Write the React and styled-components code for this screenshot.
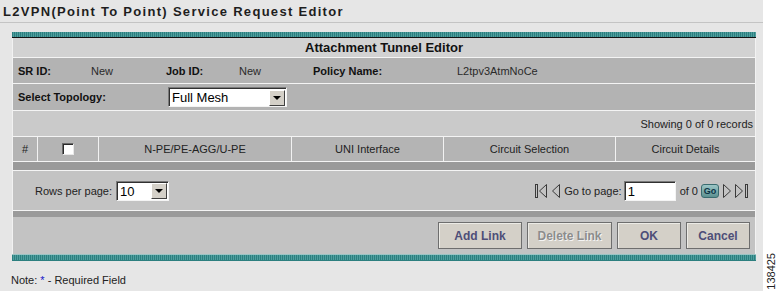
import React from 'react'
import styled, { createGlobalStyle } from 'styled-components'

const Global = createGlobalStyle`
  body {
    margin: 0;
    background: #fff;
    font-family: "Liberation Sans", Arial, sans-serif;
    color: #111;
  }
`

const Shell = styled.div`
  display: flex;
  width: 778px;
  height: 291px;
  overflow: hidden;
`

const Main = styled.div`
  width: 763px;
  background: #e6e6e6;
  display: flex;
  flex-direction: column;
`

const Side = styled.div`
  flex: 1;
  background: #fff;
  display: flex;
  flex-direction: column;
  justify-content: flex-end;
  align-items: center;
  padding-bottom: 1px;
`

const FigNo = styled.span`
  writing-mode: vertical-rl;
  transform: rotate(180deg);
  font-size: 11px;
  color: #222;
`

const TitleBar = styled.div`
  height: 23px;
  box-sizing: border-box;
  border-bottom: 1px solid #c4c4c4;
  padding-left: 3px;
  font-size: 13px;
  font-weight: bold;
  letter-spacing: 1.3px;
  line-height: 24px;
  color: #1e1e1e;
`

const Panel = styled.div`
  margin: 9px 0 0 12px;
  width: 744px;
`

const Stripe = styled.div`
  height: 5px;
  background: repeating-linear-gradient(90deg, #2c7f7f 0 1px, #4f9e9e 1px 2px);
  border-bottom: 1px solid ${p => (p.bottom ? '#2c7f7f' : '#111')};
  border-top: ${p => (p.bottom ? '1px solid #9cc4c4' : 'none')};
`

const Body = styled.div`
  border-left: 1px solid #f2f2f2;
  border-right: 1px solid #f2f2f2;
`

const Row = styled.div`
  height: ${p => p.h}px;
  background: ${p => p.bg || '#b3b3b3'};
  border-bottom: ${p => (p.noLine ? 'none' : '1px solid #f4f4f4')};
  display: flex;
  align-items: center;
  font-size: 11px;
`

const Heading = styled(Row)`
  justify-content: center;
  font-size: 13px;
  font-weight: bold;
  color: #111;
`

const InfoGrid = styled(Row)`
  display: grid;
  grid-template-columns: 73px 75px 73px 74px 144px 1fr;
  padding-left: 5px;
`

const Label = styled.span`
  font-weight: bold;
  font-size: 11px;
  color: #111;
  width: ${p => (p.w ? `${p.w}px` : 'auto')};
  padding-left: ${p => p.pl || 0}px;
`

const Value = styled.span`
  color: #2a2a2a;
`

const Records = styled(Row)`
  justify-content: flex-end;
  padding-right: 2px;
  color: #222;
`

const HeadCell = styled.div`
  width: ${p => p.w}px;
  flex: ${p => (p.w ? 'none' : 1)};
  height: 100%;
  display: flex;
  align-items: center;
  justify-content: center;
  border-right: ${p => (p.last ? 'none' : '1px solid #f2f2f2')};
  color: #222;
`

const CheckBox = styled.span`
  width: 10px;
  height: 10px;
  background: #fff;
  border-top: 1px solid #6a6a6a;
  border-left: 1px solid #6a6a6a;
  border-right: 1px solid #e8e8e8;
  border-bottom: 1px solid #e8e8e8;
  box-shadow: inset 1px 1px 0 #2a2a2a;
`

const Pager = styled(Row)`
  justify-content: space-between;
  padding: 0 6px 0 22px;
`

const Group = styled.div`
  display: flex;
  align-items: center;
  gap: ${p => p.gap || 0}px;
  color: #222;
`

const Gap = styled.span`
  width: ${p => p.w}px;
`

const SelectBox = styled.div`
  width: ${p => p.w}px;
  height: 20px;
  box-sizing: border-box;
  display: flex;
  align-items: center;
  background: #fff;
  border-top: 1px solid #7a7a7a;
  border-left: 1px solid #7a7a7a;
  border-right: 1px solid #f4f4f4;
  border-bottom: 1px solid #f4f4f4;
  box-shadow: inset 1px 1px 0 #303030;
  font-size: 13px;
  color: #000;
`

const SelectText = styled.span`
  flex: 1;
  padding-left: 3px;
  padding-top: 1px;
`

const Arrow = styled.span`
  width: 16px;
  height: 16px;
  margin: 1px 1px 0 0;
  box-sizing: border-box;
  background: #d4d0c8;
  border-top: 1px solid #fff;
  border-left: 1px solid #fff;
  border-right: 1px solid #404040;
  border-bottom: 1px solid #404040;
  display: flex;
  align-items: center;
  justify-content: center;
  &::after {
    content: '';
    border-left: 4px solid transparent;
    border-right: 4px solid transparent;
    border-top: 4px solid #000;
  }
`

const GoButton = styled.span`
  width: 18px;
  height: 14px;
  box-sizing: border-box;
  border: 1px solid #3a6c70;
  border-radius: 3px;
  background: linear-gradient(#9cc6c6, #5c9090);
  font-size: 9px;
  font-weight: bold;
  color: #0c3446;
  display: flex;
  align-items: center;
  justify-content: center;
  margin: 0 4px 0 3px;
`

const Actions = styled(Row)`
  justify-content: flex-end;
  align-items: flex-start;
  gap: 5px;
  padding: 5px 5px 0 0;
`

const Button = styled.button`
  width: ${p => p.w}px;
  height: 27px;
  box-sizing: border-box;
  background: #d4d0c8;
  border: 1px solid #6e6e6e;
  box-shadow: inset 1px 1px 0 #ecebe6;
  font-family: "Liberation Sans", Arial, sans-serif;
  font-size: 12px;
  font-weight: bold;
  color: ${p => (p.disabled ? '#8c8c8c' : '#4e4e78')};
  text-shadow: ${p => (p.disabled ? '1px 1px 0 #f4f4f4' : 'none')};
  padding: 0;
`

const Note = styled.div`
  margin: 13px 0 0 11px;
  font-size: 11px;
  line-height: 12px;
  color: #222;
`

const Star = styled.span`
  color: #1414c8;
`

const NavIcon = ({ kind }) => {
  const stroke = '#3a3a3a'
  if (kind === 'first')
    return (
      <svg width="12" height="14" viewBox="0 0 12 14">
        <rect x="0.5" y="0.5" width="2" height="13" fill="none" stroke={stroke} />
        <polygon points="11.5,0.5 4.5,7 11.5,13.5" fill="none" stroke={stroke} />
      </svg>
    )
  if (kind === 'prev')
    return (
      <svg width="8" height="14" viewBox="0 0 8 14">
        <polygon points="7.5,0.5 0.5,7 7.5,13.5" fill="none" stroke={stroke} />
      </svg>
    )
  if (kind === 'next')
    return (
      <svg width="9" height="14" viewBox="0 0 9 14">
        <polygon points="0.5,0.5 7.5,7 0.5,13.5" fill="none" stroke={stroke} />
      </svg>
    )
  return (
    <svg width="14" height="14" viewBox="0 0 14 14">
      <polygon points="0.5,0.5 7.5,7 0.5,13.5" fill="none" stroke={stroke} />
      <rect x="10.5" y="0.5" width="2" height="13" fill="none" stroke={stroke} />
    </svg>
  )
}

const columns = [
  { w: 24, label: '#' },
  { w: 60, check: true },
  { w: 192, label: 'N-PE/PE-AGG/U-PE' },
  { w: 151, label: 'UNI Interface' },
  { w: 171, label: 'Circuit Selection' },
  { label: 'Circuit Details', last: true },
]

export default function App() {
  return (
    <>
      <Global />
      <Shell>
        <Main>
          <TitleBar>L2VPN(Point To Point) Service Request Editor</TitleBar>
          <Panel>
            <Stripe />
            <Body>
              <Heading h={19} bg="#d2d2d2">Attachment Tunnel Editor</Heading>
              <InfoGrid h={25}>
                <Label>SR ID:</Label>
                <Value>New</Value>
                <Label>Job ID:</Label>
                <Value>New</Value>
                <Label>Policy Name:</Label>
                <Value>L2tpv3AtmNoCe</Value>
              </InfoGrid>
              <Row h={26}>
                <Label w={150} pl={5}>Select Topology:</Label>
                <SelectBox w={119}>
                  <SelectText>Full Mesh</SelectText>
                  <Arrow />
                </SelectBox>
              </Row>
              <Records h={25} bg="#cacaca">Showing 0 of 0 records</Records>
              <Row h={24} bg="#b4b4b4">
                {columns.map((c, i) => (
                  <HeadCell key={i} w={c.w} last={c.last}>
                    {c.check ? <CheckBox /> : c.label}
                  </HeadCell>
                ))}
              </Row>
              <Row h={8} bg="#9a9a9a" />
              <Pager h={39} bg="#c3c3c3">
                <Group gap={4}>
                  Rows per page:
                  <SelectBox w={53}>
                    <SelectText>10</SelectText>
                    <Arrow />
                  </SelectBox>
                </Group>
                <Group>
                  <NavIcon kind="first" />
                  <Gap w={5} />
                  <NavIcon kind="prev" />
                  <Gap w={4} />
                  Go to page:
                  <Gap w={2} />
                  <SelectBox w={52}>
                    <SelectText>1</SelectText>
                  </SelectBox>
                  <Gap w={4} />
                  of 0
                  <GoButton>Go</GoButton>
                  <NavIcon kind="next" />
                  <Gap w={3} />
                  <NavIcon kind="last" />
                </Group>
              </Pager>
              <Row h={6} bg="#9a9a9a" noLine />
              <Actions h={32} bg="#c3c3c3" noLine>
                <Button w={84}>Add Link</Button>
                <Button w={85} disabled>Delete Link</Button>
                <Button w={64}>OK</Button>
                <Button w={64}>Cancel</Button>
              </Actions>
            </Body>
            <Stripe bottom />
          </Panel>
          <Note>
            Note: <Star>*</Star> - Required Field
          </Note>
        </Main>
        <Side>
          <FigNo>138425</FigNo>
        </Side>
      </Shell>
    </>
  )
}
